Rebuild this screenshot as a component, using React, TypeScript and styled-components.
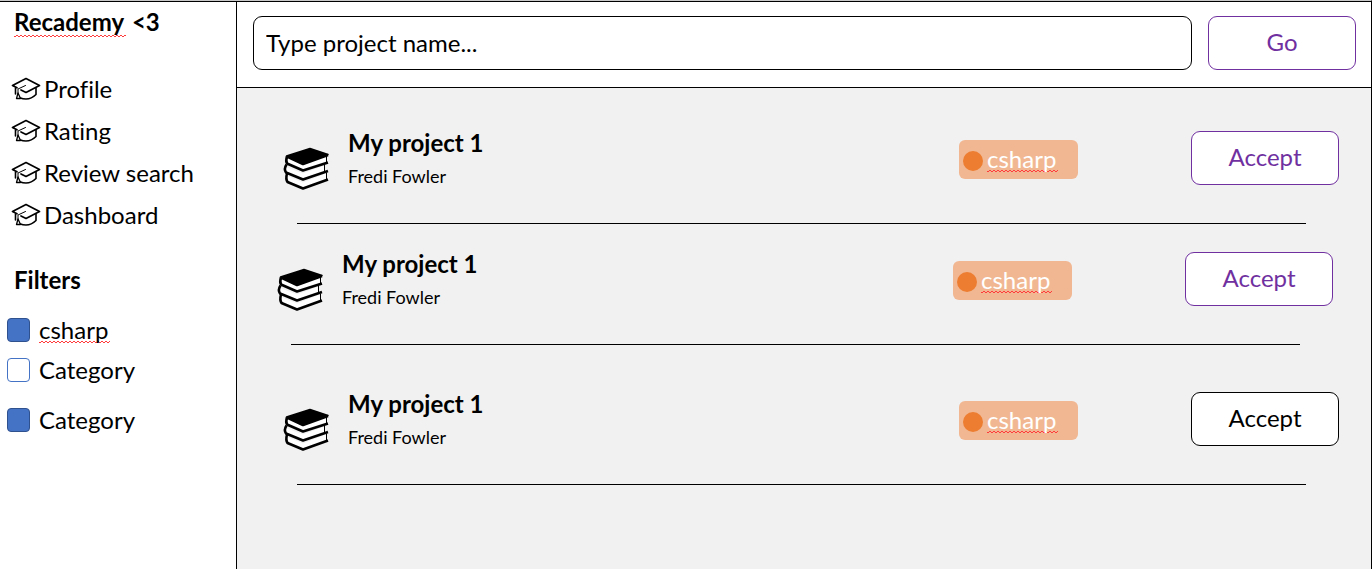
import React from 'react';
import styled, { createGlobalStyle } from 'styled-components';

const GlobalStyle = createGlobalStyle`
  *, *::before, *::after { box-sizing: border-box; }
  body {
    margin: 0;
    background: #fff;
    color: #000;
    font-family: Lato, "Liberation Sans", sans-serif;
    font-size: 24px;
    line-height: 28px;
    font-variant-ligatures: none;
  }
  h1, h2, h3, p, ul { margin: 0; padding: 0; }
  ul { list-style: none; }
  button, input { font: inherit; color: inherit; }
`;

const Page = styled.div`
  display: flex;
  min-height: 100vh;
  border-top: 1px solid #c8c8c8;
  border-right: 1px solid #000;
`;

const Sidebar = styled.aside`
  flex: 0 0 236px;
  padding-top: 6px;
  border-top: 1px solid #000;
`;

const Heading = styled.h1`
  padding-left: 14px;
  font-size: 24px;
  line-height: 28px;
  font-weight: 700;
`;

const Misspelled = styled.span`
  padding: 0 2px 1px 0;
  background:
    repeating-linear-gradient(90deg, #ff3b3b 0 2px, transparent 2px 4px) 0 100% / 100% 1px no-repeat,
    repeating-linear-gradient(90deg, transparent 0 2px, #ff3b3b 2px 4px) 0 calc(100% - 1px) / 100% 1px no-repeat;
  line-height: 24px;
`;

const NavList = styled.ul`
  padding: 32px 0 30px 11px;
`;

const NavLink = styled.a`
  display: flex;
  align-items: center;
  gap: 3px;
  height: 42px;
  color: inherit;
  text-decoration: none;
`;

const FilterList = styled.div`
  display: flex;
  flex-direction: column;
  padding: 22px 0 0 7px;
`;

const FilterLabel = styled.label<{ $gap?: number }>`
  display: flex;
  align-items: center;
  gap: 9px;
  height: 28px;
  margin-top: ${(p) => p.$gap ?? 0}px;
`;

const Checkbox = styled.input`
  appearance: none;
  width: 23px;
  height: 24px;
  margin: 0;
  border: 1px solid #4472c4;
  border-radius: 4px;
  background: #fff;
  &:checked {
    background: #4472c4;
    border-color: #2f528f;
  }
`;

const Main = styled.main`
  flex: 1;
  min-width: 0;
  border-left: 1px solid #000;
  background: #f1f1f1;
`;

const SearchBar = styled.form`
  display: flex;
  gap: 16px;
  padding: 14px 15px 17px 16px;
  border-top: 1px solid #000;
  border-bottom: 1px solid #000;
  background: #fff;
`;

const SearchInput = styled.input`
  flex: 1;
  min-width: 0;
  height: 54px;
  padding: 0 12px 2px;
  border: 1px solid #000;
  border-radius: 9px;
  background: #fff;
  &::placeholder { color: #000; opacity: 1; }
`;

const Button = styled.button<{ $plain?: boolean }>`
  flex: 0 0 148px;
  height: 54px;
  padding: 0 0 2px;
  border: 1px solid ${(p) => (p.$plain ? '#000' : '#7030a0')};
  border-radius: 9px;
  background: #fff;
  color: ${(p) => (p.$plain ? '#000' : '#7030a0')};
`;

const Project = styled.li<{ $top: number; $shift?: number }>`
  padding: ${(p) => p.$top}px ${(p) => 32 + (p.$shift ?? 0)}px 0 ${(p) => 46 - (p.$shift ?? 0)}px;
`;

const ProjectRow = styled.div`
  display: flex;
  align-items: center;
`;

const Books = styled.svg`
  align-self: flex-end;
  margin-bottom: -4px;
`;

const ProjectInfo = styled.div`
  flex: 1;
  padding-left: 18px;
`;

const ProjectTitle = styled.h3`
  font-size: 24px;
  line-height: 28px;
  font-weight: 700;
`;

const Author = styled.p`
  margin-top: 8px;
  font-size: 18px;
  line-height: 22px;
`;

const Tag = styled.span`
  display: flex;
  align-items: center;
  gap: 4px;
  width: 119px;
  height: 39px;
  margin: 2px 113px 0 0;
  padding-left: 4px;
  border-radius: 6px;
  background: #f1b792;
  color: #fff;
`;

const Dot = styled.i`
  width: 20px;
  height: 20px;
  margin-top: 3px;
  border-radius: 50%;
  background: #ed7d31;
`;

const Divider = styled.hr`
  height: 1px;
  margin: 36px 33px 0 14px;
  border: 0;
  background: #000;
`;

const CapIcon = () => (
  <svg width="30" height="24" viewBox="0 0 30 24" fill="none" stroke="#000" strokeLinejoin="round" strokeLinecap="round" aria-hidden="true">
    <path d="M6 10.800 1.500 8.500 15 1.500 28.500 8.500 15 15.500 10 13" strokeWidth="1.700" />
    <path d="M14.500 8.500 7 12V17" strokeWidth="1" />
    <path d="M4.500 11V17M25 11V17.500Q20.500 22 15 22 11.500 22 9.500 21" strokeWidth="1.600" />
    <path d="M7 16 9.500 21.500H5.500Z" strokeWidth="1.300" />
  </svg>
);

const BooksIcon = () => (
  <Books width="47" height="44" viewBox="0 0 47 44" aria-hidden="true">
    <path d="M3.500 9 27 1.500 45 7.500 20 17Z" fill="#000" stroke="#000" strokeWidth="1.500" strokeLinejoin="round" />
    <g fill="#fff">
      <path d="M4 11V17L20 24 43 15.500V9.500L20 18Z" />
      <path d="M3 20V26L20 33 41.500 25V18.500L20 26.500Z" />
      <path d="M4 29V35.500L20 41.500 43 33V26.500L20 35.500Z" />
    </g>
    <g fill="none" stroke="#000" strokeWidth="2.600" strokeLinejoin="round">
      <path d="M4 9.500Q2.500 14 4 16.500L20 23.500 45 15.500" />
      <path d="M3.500 17.500Q0.500 22 3 25.500L20 32.500 45 24" />
      <path d="M4 26.500Q2.500 32 4.500 35L20 41.500 45 32.500" />
      <path d="M4 9.500 20 17 45 8" />
    </g>
    <path d="M43.500 9V15M41.500 17V24M43.500 26V32" stroke="#000" strokeWidth="1" />
  </Books>
);

const navItems = ['Profile', 'Rating', 'Review search', 'Dashboard'];

const projects = [
  { id: 1, top: 41, shift: 0, plain: false },
  { id: 2, top: 26, shift: 6, plain: false },
  { id: 3, top: 45, shift: 0, plain: true },
];

export default function App() {
  return (
    <>
      <GlobalStyle />
      <Page>
        <Sidebar>
          <Heading><Misspelled>Recademy</Misspelled> &lt;3</Heading>
          <nav>
            <NavList>
              {navItems.map((item) => (
                <li key={item}><NavLink href="#"><CapIcon />{item}</NavLink></li>
              ))}
            </NavList>
          </nav>
          <Heading as="h2">Filters</Heading>
          <FilterList>
            <FilterLabel><Checkbox type="checkbox" defaultChecked /><Misspelled>csharp</Misspelled></FilterLabel>
            <FilterLabel $gap={12}><Checkbox type="checkbox" />Category</FilterLabel>
            <FilterLabel $gap={22}><Checkbox type="checkbox" defaultChecked />Category</FilterLabel>
          </FilterList>
        </Sidebar>
        <Main>
          <SearchBar onSubmit={(e) => e.preventDefault()}>
            <SearchInput type="text" aria-label="Project name" placeholder="Type project name..." />
            <Button type="submit">Go</Button>
          </SearchBar>
          <ul>
            {projects.map((p) => (
              <Project key={p.id} $top={p.top} $shift={p.shift}>
                <ProjectRow>
                  <BooksIcon />
                  <ProjectInfo>
                    <ProjectTitle>My project 1</ProjectTitle>
                    <Author>Fredi Fowler</Author>
                  </ProjectInfo>
                  <Tag><Dot /><Misspelled>csharp</Misspelled></Tag>
                  <Button type="button" $plain={p.plain}>Accept</Button>
                </ProjectRow>
                <Divider />
              </Project>
            ))}
          </ul>
        </Main>
      </Page>
    </>
  );
}
